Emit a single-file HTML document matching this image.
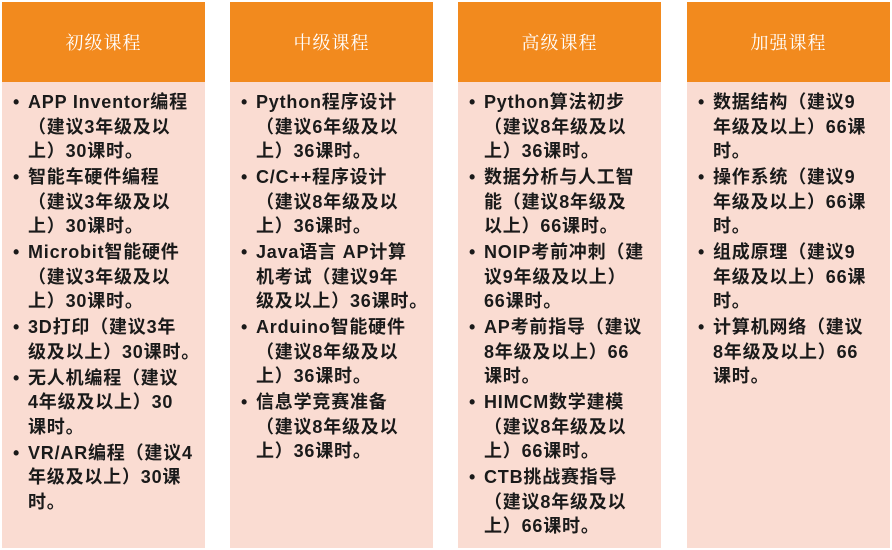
<html><head><style>
body{margin:0;width:892px;height:550px;background:#fff;position:relative;font-family:"Liberation Sans","Noto Sans CJK SC",sans-serif;}
.c{position:absolute;top:2px;width:203px;height:546px;background:#fadcd2;}
.h{height:80px;background:#f28a1e;color:#fff;font-size:18px;line-height:80px;text-align:center;letter-spacing:1px;font-family:"Noto Serif CJK SC","Liberation Serif",serif;}
ul{margin:0;padding:8px 0 0 26px;list-style:none;}
li{position:relative;font-size:18px;font-weight:bold;line-height:24.5px;color:#1a1a1a;white-space:nowrap;letter-spacing:0.8px;margin-bottom:1.5px;}
li:before{content:"•";position:absolute;left:-15px;}
</style></head><body>
<div class="c" style="left:2px"><div class="h">初级课程</div><ul>
<li>APP Inventor编程<br>（建议3年级及以<br>上）30课时。</li>
<li>智能车硬件编程<br>（建议3年级及以<br>上）30课时。</li>
<li>Microbit智能硬件<br>（建议3年级及以<br>上）30课时。</li>
<li>3D打印（建议3年<br>级及以上）30课时。</li>
<li>无人机编程（建议<br>4年级及以上）30<br>课时。</li>
<li>VR/AR编程（建议4<br>年级及以上）30课<br>时。</li></ul></div>
<div class="c" style="left:230px"><div class="h">中级课程</div><ul>
<li>Python程序设计<br>（建议6年级及以<br>上）36课时。</li>
<li>C/C++程序设计<br>（建议8年级及以<br>上）36课时。</li>
<li>Java语言 AP计算<br>机考试（建议9年<br>级及以上）36课时。</li>
<li>Arduino智能硬件<br>（建议8年级及以<br>上）36课时。</li>
<li>信息学竞赛准备<br>（建议8年级及以<br>上）36课时。</li></ul></div>
<div class="c" style="left:458px"><div class="h">高级课程</div><ul>
<li>Python算法初步<br>（建议8年级及以<br>上）36课时。</li>
<li>数据分析与人工智<br>能（建议8年级及<br>以上）66课时。</li>
<li>NOIP考前冲刺（建<br>议9年级及以上）<br>66课时。</li>
<li>AP考前指导（建议<br>8年级及以上）66<br>课时。</li>
<li>HIMCM数学建模<br>（建议8年级及以<br>上）66课时。</li>
<li>CTB挑战赛指导<br>（建议8年级及以<br>上）66课时。</li></ul></div>
<div class="c" style="left:687px"><div class="h">加强课程</div><ul>
<li>数据结构（建议9<br>年级及以上）66课<br>时。</li>
<li>操作系统（建议9<br>年级及以上）66课<br>时。</li>
<li>组成原理（建议9<br>年级及以上）66课<br>时。</li>
<li>计算机网络（建议<br>8年级及以上）66<br>课时。</li></ul></div>
</body></html>
